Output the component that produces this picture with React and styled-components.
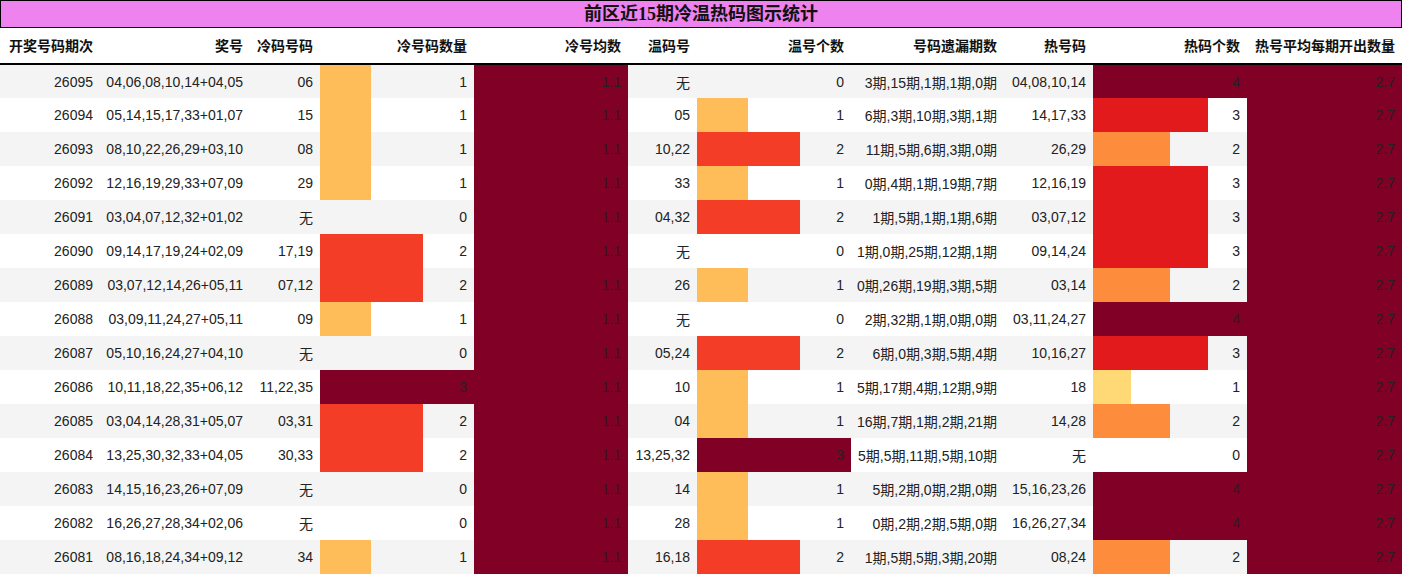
import React from "react";
import styled, { createGlobalStyle } from "styled-components";

const Global = createGlobalStyle`
  html, body { margin: 0; padding: 0; background: #fff; }
  body { font-family: "Liberation Sans", "Noto Sans CJK SC", sans-serif; color: #222; }
`;

const Page = styled.div`
  width: 1402px;
`;

const Title = styled.div`
  box-sizing: border-box;
  height: 28px;
  border: 1px solid #000;
  background: #ee82ee;
  display: flex;
  align-items: center;
  justify-content: center;
  font-family: "Liberation Serif", "Noto Sans CJK SC", serif;
  font-weight: bold;
  font-size: 18px;
  color: #111;
  line-height: 1;
`;

const Table = styled.table`
  width: 1402px;
  border-collapse: collapse;
  table-layout: fixed;
  font-size: 14px;
`;

const HeadCell = styled.th`
  box-sizing: border-box;
  height: 36px;
  padding: 0 7px 2px 0;
  text-align: right;
  font-family: "Noto Sans CJK SC", sans-serif;
  font-weight: bold;
  font-size: 14px;
  color: #111;
  border-bottom: 2px solid #000;
  white-space: nowrap;
  overflow: hidden;
`;

const Row = styled.tr`
  background: ${(p) => (p.$odd ? "#f4f4f4" : "#fff")};
`;

const Cell = styled.td`
  box-sizing: border-box;
  height: 34px;
  padding: 0 7px 0 0;
  text-align: right;
  white-space: nowrap;
  overflow: hidden;
  color: #222;
`;

const BarCell = styled(Cell)`
  background: ${(p) =>
    p.$pct > 0
      ? `linear-gradient(to right, ${p.$color} 0, ${p.$color} ${p.$pct}%, transparent ${p.$pct}%)`
      : "transparent"};
`;

const widths = [100, 150, 70, 154, 154, 69, 154, 153, 89, 154, 155];
const headers = [
  "开奖号码期次",
  "奖号",
  "冷码号码",
  "冷号码数量",
  "冷号均数",
  "温码号",
  "温号个数",
  "号码遗漏期数",
  "热号码",
  "热码个数",
  "热号平均每期开出数量",
];

const rows = [
  ["26095", "04,06,08,10,14+04,05", "06", 1, "无", 0, "3期,15期,1期,1期,0期", "04,08,10,14", 4],
  ["26094", "05,14,15,17,33+01,07", "15", 1, "05", 1, "6期,3期,10期,3期,1期", "14,17,33", 3],
  ["26093", "08,10,22,26,29+03,10", "08", 1, "10,22", 2, "11期,5期,6期,3期,0期", "26,29", 2],
  ["26092", "12,16,19,29,33+07,09", "29", 1, "33", 1, "0期,4期,1期,19期,7期", "12,16,19", 3],
  ["26091", "03,04,07,12,32+01,02", "无", 0, "04,32", 2, "1期,5期,1期,1期,6期", "03,07,12", 3],
  ["26090", "09,14,17,19,24+02,09", "17,19", 2, "无", 0, "1期,0期,25期,12期,1期", "09,14,24", 3],
  ["26089", "03,07,12,14,26+05,11", "07,12", 2, "26", 1, "0期,26期,19期,3期,5期", "03,14", 2],
  ["26088", "03,09,11,24,27+05,11", "09", 1, "无", 0, "2期,32期,1期,0期,0期", "03,11,24,27", 4],
  ["26087", "05,10,16,24,27+04,10", "无", 0, "05,24", 2, "6期,0期,3期,5期,4期", "10,16,27", 3],
  ["26086", "10,11,18,22,35+06,12", "11,22,35", 3, "10", 1, "5期,17期,4期,12期,9期", "18", 1],
  ["26085", "03,04,14,28,31+05,07", "03,31", 2, "04", 1, "16期,7期,1期,2期,21期", "14,28", 2],
  ["26084", "13,25,30,32,33+04,05", "30,33", 2, "13,25,32", 3, "5期,5期,11期,5期,10期", "无", 0],
  ["26083", "14,15,16,23,26+07,09", "无", 0, "14", 1, "5期,2期,0期,2期,0期", "15,16,23,26", 4],
  ["26082", "16,26,27,28,34+02,06", "无", 0, "28", 1, "0期,2期,2期,5期,0期", "16,26,27,34", 4],
  ["26081", "08,16,18,24,34+09,12", "34", 1, "16,18", 2, "1期,5期,5期,3期,20期", "08,24", 2],
];

const DARK = "#800026";
const coldColors = { 1: "#febd59", 2: "#f43d26", 3: DARK };
const hotColors = { 1: "#fed976", 2: "#fd8d3c", 3: "#e31a1c", 4: DARK };

export default function App() {
  return (
    <Page>
      <Global />
      <Title>前区近15期冷温热码图示统计</Title>
      <Table>
        <colgroup>
          {widths.map((w, i) => (
            <col key={i} style={{ width: w }} />
          ))}
        </colgroup>
        <thead>
          <tr>
            {headers.map((h) => (
              <HeadCell key={h}>{h}</HeadCell>
            ))}
          </tr>
        </thead>
        <tbody>
          {rows.map((r, i) => (
            <Row key={r[0]} $odd={i % 2 === 0}>
              <Cell>{r[0]}</Cell>
              <Cell>{r[1]}</Cell>
              <Cell>{r[2]}</Cell>
              <BarCell $pct={(r[3] / 3) * 100} $color={coldColors[r[3]]}>{r[3]}</BarCell>
              <BarCell $pct={100} $color={DARK}>1.1</BarCell>
              <Cell>{r[4]}</Cell>
              <BarCell $pct={(r[5] / 3) * 100} $color={coldColors[r[5]]}>{r[5]}</BarCell>
              <Cell>{r[6]}</Cell>
              <Cell>{r[7]}</Cell>
              <BarCell $pct={(r[8] / 4) * 100} $color={hotColors[r[8]]}>{r[8]}</BarCell>
              <BarCell $pct={100} $color={DARK}>2.7</BarCell>
            </Row>
          ))}
        </tbody>
      </Table>
    </Page>
  );
}
